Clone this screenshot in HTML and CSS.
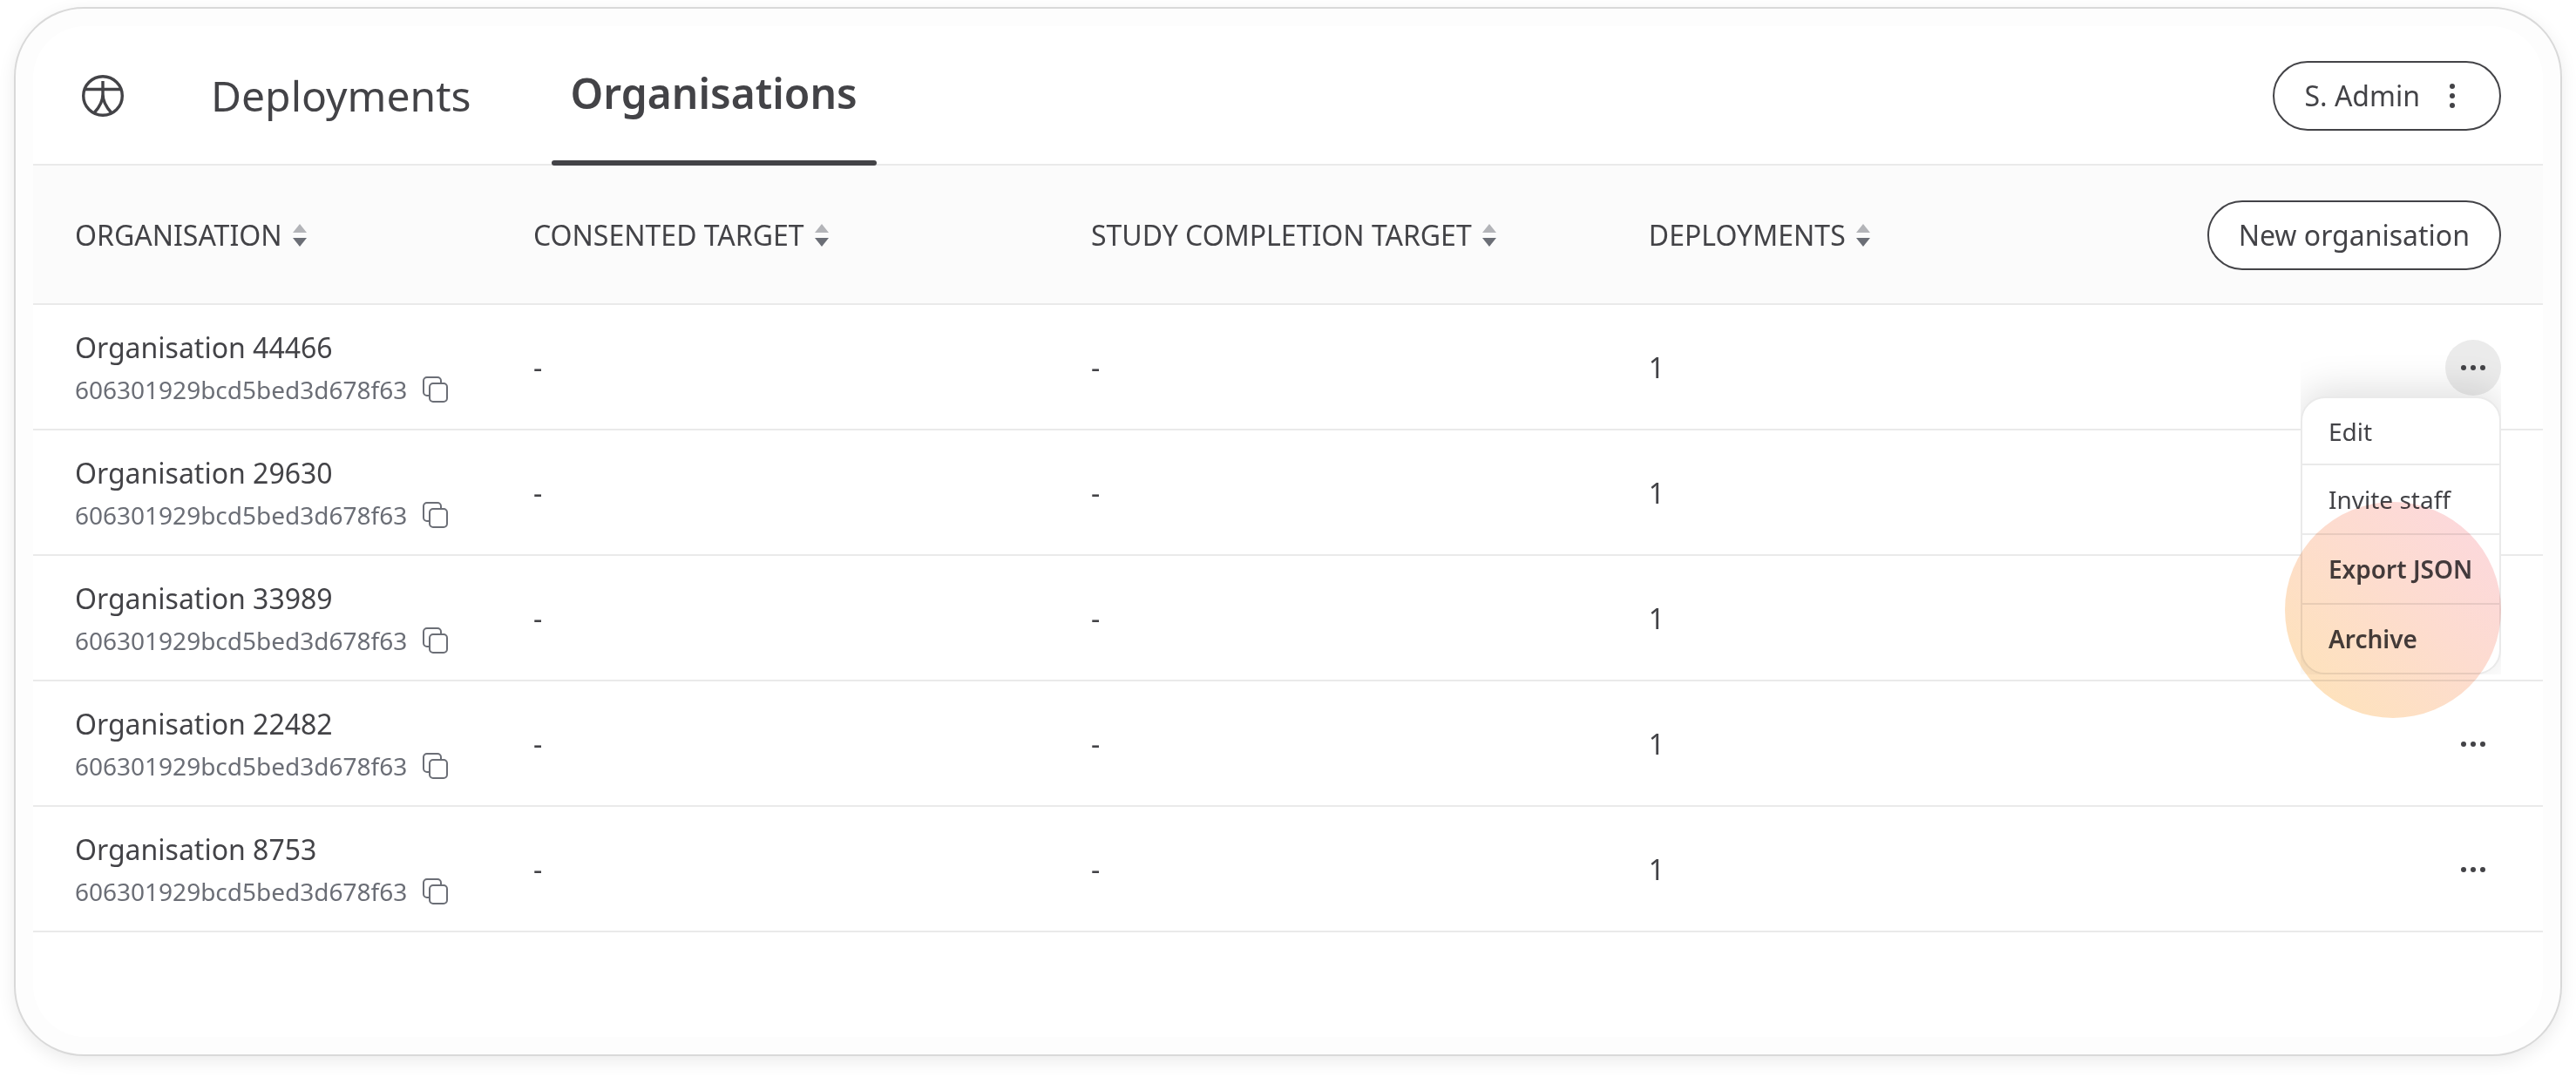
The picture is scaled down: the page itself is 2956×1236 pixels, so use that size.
FILE: index.html
```html
<!DOCTYPE html>
<html lang="en">
<head>
<meta charset="utf-8">
<title>Organisations</title>
<link rel="stylesheet" href="styles.css">
</head>
<body>
<svg class="sprite" aria-hidden="true">
  <symbol id="copy" viewBox="-1 -1 32 32"><rect x="9" y="8" width="20" height="21" rx="4"/><path d="M8 22H6a4 4 0 0 1-4-4V5a4 4 0 0 1 4-4h12a4 4 0 0 1 4 4v2"/></symbol>
  <symbol id="dots" viewBox="0 0 64 64"><circle cx="21" cy="32" r="3"/><circle cx="32" cy="32" r="3"/><circle cx="43" cy="32" r="3"/></symbol>
  <symbol id="sort" viewBox="0 0 16 26"><path class="sort-up" d="M8 0L16 10H0z"/><path class="sort-down" d="M0 16H16L8 26z"/></symbol>
</svg>
<div class="frame">
  <div class="panel">
    <header class="topbar">
      <a class="logo" href="#" aria-label="Home"><svg viewBox="0 0 64 64"><circle cx="32" cy="32" r="22.3"/><path d="M12 24.500H52M32 15V30C32 38 28 45 22.500 51M32 30C32 38 36 45 41.500 51"/></svg></a>
      <nav class="tabs">
        <a class="tab" href="#">Deployments</a>
        <a class="tab tab-active" href="#" aria-current="page">Organisations</a>
      </nav>
      <button class="pill" type="button">S. Admin
        <svg class="kebab" viewBox="0 0 40 40"><circle cx="20" cy="9" r="3"/><circle cx="20" cy="20" r="3"/><circle cx="20" cy="31" r="3"/></svg>
      </button>
    </header>
    <table class="list">
      <colgroup><col class="col-name"><col class="col-value"><col class="col-value"><col class="col-value"><col></colgroup>
      <thead>
        <tr>
          <th><button class="sort" type="button">ORGANISATION <svg><use href="#sort"/></svg></button></th>
          <th><button class="sort" type="button">CONSENTED TARGET <svg><use href="#sort"/></svg></button></th>
          <th><button class="sort" type="button">STUDY COMPLETION TARGET <svg><use href="#sort"/></svg></button></th>
          <th><button class="sort" type="button">DEPLOYMENTS <svg><use href="#sort"/></svg></button></th>
          <th class="actions"><button class="pill" type="button">New organisation</button></th>
        </tr>
      </thead>
      <tbody>
        <tr>
          <td><div class="org"><span>Organisation 44466</span><span class="org-id">606301929bcd5bed3d678f63 <button class="copy" type="button" aria-label="Copy ID"><svg><use href="#copy"/></svg></button></span></div></td>
          <td>-</td><td>-</td><td>1</td>
          <td class="actions">
            <div class="more-wrap">
              <button class="more more-open" type="button" aria-label="More actions"><svg><use href="#dots"/></svg></button>
              <div class="menu">
                <button class="item" type="button">Edit</button>
                <button class="item" type="button">Invite staff</button>
                <button class="item item-strong" type="button">Export JSON</button>
                <button class="item item-strong" type="button">Archive</button>
              </div>
              <div class="spotlight"></div>
            </div>
          </td>
        </tr>
        <tr>
          <td><div class="org"><span>Organisation 29630</span><span class="org-id">606301929bcd5bed3d678f63 <button class="copy" type="button" aria-label="Copy ID"><svg><use href="#copy"/></svg></button></span></div></td>
          <td>-</td><td>-</td><td>1</td><td></td>
        </tr>
        <tr>
          <td><div class="org"><span>Organisation 33989</span><span class="org-id">606301929bcd5bed3d678f63 <button class="copy" type="button" aria-label="Copy ID"><svg><use href="#copy"/></svg></button></span></div></td>
          <td>-</td><td>-</td><td>1</td><td></td>
        </tr>
        <tr>
          <td><div class="org"><span>Organisation 22482</span><span class="org-id">606301929bcd5bed3d678f63 <button class="copy" type="button" aria-label="Copy ID"><svg><use href="#copy"/></svg></button></span></div></td>
          <td>-</td><td>-</td><td>1</td>
          <td class="actions"><div class="more-wrap"><button class="more" type="button" aria-label="More actions"><svg><use href="#dots"/></svg></button></div></td>
        </tr>
        <tr>
          <td><div class="org"><span>Organisation 8753</span><span class="org-id">606301929bcd5bed3d678f63 <button class="copy" type="button" aria-label="Copy ID"><svg><use href="#copy"/></svg></button></span></div></td>
          <td>-</td><td>-</td><td>1</td>
          <td class="actions"><div class="more-wrap"><button class="more" type="button" aria-label="More actions"><svg><use href="#dots"/></svg></button></div></td>
        </tr>
      </tbody>
    </table>
  </div>
</div>
</body>
</html>
```
FILE: styles.css
```css
:root {
  --ink: #434347;
  --muted: #6b6e76;
  --line: #eaeaea;
}

* {
  box-sizing: border-box;
}

body {
  margin: 0;
  padding: 8px 16px 24px;
  min-height: 100vh;
  display: flex;
  background: #fff;
  color: var(--ink);
  font: 32px/48px "Noto Sans", sans-serif;
}

button {
  margin: 0;
  padding: 0;
  border: 0;
  background: none;
  color: inherit;
  font: inherit;
}

svg {
  display: block;
}

.sprite {
  position: absolute;
  width: 0;
  height: 0;
}

.frame {
  flex: 1;
  display: flex;
  padding: 20px;
  border: 2px solid #d9d9d9;
  border-radius: 80px;
  background: #fdfdfd;
  box-shadow: 0 6px 20px rgba(0, 0, 0, 0.08);
}

.panel {
  flex: 1;
  border-radius: 60px;
  background: #fff;
}

.topbar {
  display: flex;
  align-items: center;
  gap: 70px;
  height: 160px;
  padding: 0 48px;
  box-shadow: inset 0 -2px var(--line);
}

.logo svg {
  width: 64px;
  height: 64px;
  fill: none;
  stroke: var(--ink);
  stroke-width: 3.4;
}

.tabs {
  flex: 1;
  align-self: stretch;
  display: flex;
  gap: 70px;
}

.tab {
  position: relative;
  display: flex;
  align-items: center;
  padding: 0 22px;
  color: inherit;
  font-size: 48px;
  text-decoration: none;
}

.tab-active {
  padding-bottom: 6px;
  font-weight: 600;
}

.tab-active::after {
  content: "";
  position: absolute;
  right: 0;
  bottom: 0;
  left: 0;
  height: 6px;
  border-radius: 3px;
  background: var(--ink);
}

.pill {
  display: inline-flex;
  align-items: center;
  gap: 17px;
  height: 80px;
  padding: 0 34px;
  border: 2px solid var(--ink);
  border-radius: 40px;
  background: #fff;
  white-space: nowrap;
}

.kebab {
  width: 40px;
  height: 40px;
  fill: var(--ink);
}

.list {
  width: 100%;
  table-layout: fixed;
  border-collapse: separate;
  border-spacing: 0;
}

.col-name {
  width: 19.93%;
}

.col-value {
  width: 22.22%;
}

th,
td {
  padding: 2px 0 0;
  border-bottom: 2px solid var(--line);
  font-weight: 400;
  text-align: left;
  vertical-align: middle;
}

th {
  height: 160px;
  background: #fbfbfb;
}

td {
  height: 144px;
}

th:first-child,
td:first-child {
  padding-left: 48px;
}

.actions {
  padding-right: 48px;
}

.actions > * {
  margin-left: auto;
}

th.actions {
  text-align: right;
}

th .pill {
  vertical-align: middle;
}

.sort {
  display: flex;
  align-items: center;
  gap: 12px;
  white-space: nowrap;
}

.sort svg {
  width: 16px;
  height: 26px;
}

.sort-up {
  fill: #b3b4b8;
}

.sort-down {
  fill: var(--muted);
}

.org {
  display: flex;
  flex-direction: column;
  padding-top: 2px;
}

.org-id {
  display: flex;
  align-items: center;
  gap: 16px;
  color: var(--muted);
  font-size: 28px;
}

.copy svg {
  width: 32px;
  height: 32px;
  fill: none;
  stroke: var(--muted);
  stroke-width: 2;
}

.more-wrap {
  position: relative;
  width: 64px;
}

.more {
  display: block;
  border-radius: 50%;
}

.more-open {
  background: #ebebeb;
}

.more svg {
  width: 64px;
  height: 64px;
  fill: var(--ink);
}

.menu {
  position: absolute;
  top: 65px;
  right: 0;
  width: 230px;
  border: 2px solid var(--line);
  border-radius: 28px;
  background: #fff;
  box-shadow: 0 -8px 44px rgba(0, 0, 0, 0.13);
  clip-path: inset(-60px 0 0 0);
}

.item {
  display: block;
  width: 100%;
  height: 80px;
  padding: 0 30px;
  border-bottom: 2px solid var(--line);
  font-size: 28px;
  text-align: left;
  white-space: nowrap;
}

.item:first-child {
  height: 77px;
}

.item:last-child {
  height: 78px;
  border-bottom: 0;
}

.item-strong {
  font-weight: 600;
}

.spotlight {
  position: absolute;
  top: 186px;
  right: 0;
  width: 248px;
  height: 248px;
  border-radius: 50%;
  background: linear-gradient(45deg, #fee4b6 0%, #fddccf 55%, #fcd7e0 100%);
  mix-blend-mode: multiply;
  pointer-events: none;
}
```
